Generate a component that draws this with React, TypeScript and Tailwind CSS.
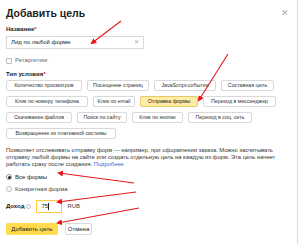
const TYPE_ROWS: { label: string; w: string; active?: boolean }[][] = [
  [
    { label: "Количество просмотров", w: "w-[76px]" },
    { label: "Посещение страниц", w: "w-[62px]" },
    { label: "JavaScript-события", w: "w-[62px]" },
    { label: "Составная цель", w: "w-[53px]" },
  ],
  [
    { label: "Клик по номеру телефона", w: "w-[82px]" },
    { label: "Клик по email", w: "w-[42px]" },
    { label: "Отправка формы", w: "w-[58px]", active: true },
    { label: "Переход в мессенджер", w: "w-[73px]" },
  ],
  [
    { label: "Скачивание файлов", w: "w-[66px]" },
    { label: "Поиск по сайту", w: "w-[50px]" },
    { label: "Клик по кнопке", w: "w-[51px]" },
    { label: "Переход в соц. сеть", w: "w-[64px]" },
  ],
  [{ label: "Возвращение из платежной системы", w: "w-[110px]" }],
];

const ARROWS: [number, number, number, number][] = [
  [121, 21, 92, 43],
  [228, 54, 199, 100],
  [134, 183, 59, 173],
  [136, 192, 58, 202],
  [139, 208, 58, 223],
];

function TypeButton({ label, w, active }: { label: string; w: string; active?: boolean }) {
  return (
    <div
      className={
        w +
        (active
          ? " shrink-0 whitespace-nowrap h-[11px] flex items-center justify-center rounded-[2px] border border-[#e6c86a] bg-[#ffeca6] text-[#222]"
          : " shrink-0 whitespace-nowrap h-[11px] flex items-center justify-center rounded-[2px] border border-[#d9d9d9] bg-white text-[#333]")
      }
    >
      {label}
    </div>
  );
}

function Arrows() {
  return (
    <svg className="absolute inset-0 pointer-events-none" width="300" height="244">
      <defs>
        <marker id="head" markerWidth="6" markerHeight="6" refX="4" refY="3" orient="auto" markerUnits="userSpaceOnUse">
          <path d="M0,0 L6,3 L0,6 Z" fill="#e8161b" />
        </marker>
      </defs>
      {ARROWS.map(([x1, y1, x2, y2], i) => (
        <line key={i} x1={x1} y1={y1} x2={x2} y2={y2} stroke="#e8161b" strokeWidth="1.1" markerEnd="url(#head)" />
      ))}
    </svg>
  );
}

export default function App() {
  return (
    <div
      className="relative w-[300px] h-[244px] overflow-hidden bg-white text-[#222]"
      style={{ fontFamily: "'Liberation Sans', Arial, sans-serif" }}
    >
      <div className="w-[298px] h-full border-r border-[#dcdcdc] pl-[6px] pt-[7px]">
        <div className="flex items-center justify-between pr-[8px]">
          <span className="text-[10.5px] leading-[13px] font-bold">Добавить цель</span>
          <span className="text-[9px] leading-none text-[#aaa]">✕</span>
        </div>

        <div className="mt-[6px] text-[6px] leading-[7px] font-bold">
          Название<span className="text-[#e8161b]">*</span>
        </div>
        <div className="mt-[3px] w-[138px] h-[13px] border border-[#d9d9d9] flex items-center justify-between pl-[4px] pr-[4px] text-[6px]">
          <span>Лид по любой форме</span>
          <span className="text-[#aaa] text-[6px]">✕</span>
        </div>

        <div className="mt-[7px] flex items-center gap-[3px] text-[6px] text-[#666]">
          <span className="w-[6px] h-[6px] border border-[#bbb] rounded-[1px]" />
          <span>Ретаргетинг</span>
        </div>

        <div className="mt-[6px] text-[6px] leading-[7px] font-bold">
          Тип условия<span className="text-[#e8161b]">*</span>
        </div>

        <div className="mt-[2px] flex flex-col gap-[5px] text-[5.3px] leading-none">
          {TYPE_ROWS.map((row, i) => (
            <div key={i} className="flex gap-[5px]">
              {row.map((b) => (
                <TypeButton key={b.label} label={b.label} w={b.w} active={b.active} />
              ))}
            </div>
          ))}
        </div>

        <p className="mt-[8px] whitespace-nowrap text-[5.8px] leading-[7px] text-[#333]">
          Позволяет отслеживать отправку форм — например, при оформлении заказа. Можно засчитывать
          <br />
          отправку любой формы на сайте или создать отдельную цель на каждую из форм. Эта цель начнет
          <br />
          работать сразу после создания. <span className="text-[#2f6fd6]">Подробнее</span>
        </p>

        <div className="mt-[6px] flex flex-col gap-[6px] text-[6px] leading-[6px]">
          <div className="flex items-center gap-[3px]">
            <span className="w-[6px] h-[6px] rounded-full border border-[#999] flex items-center justify-center">
              <span className="w-[3px] h-[3px] rounded-full bg-[#222]" />
            </span>
            <span>Все формы</span>
          </div>
          <div className="flex items-center gap-[3px] text-[#444]">
            <span className="w-[6px] h-[6px] rounded-full border border-[#bbb]" />
            <span>Конкретная форма</span>
          </div>
        </div>

        <div className="mt-[8px] flex items-center text-[6px]">
          <span className="font-bold">Доход</span>
          <span className="ml-[2px] w-[5px] h-[5px] rounded-full border border-[#bbb]" />
          <div className="ml-[5px] w-[26px] h-[13px] border border-[#ffcc33] flex items-center pl-[4px]">
            <span>75</span>
            <span className="w-px h-[7px] bg-[#222]" />
          </div>
          <span className="ml-[5px] text-[#444]">RUB</span>
        </div>

        <div className="mt-[10px] flex gap-[7px] text-[6px]">
          <div className="w-[52px] h-[12px] rounded-[2px] bg-[#ffdb4d] flex items-center justify-center">Добавить цель</div>
          <div className="w-[27px] h-[12px] rounded-[2px] border border-[#d9d9d9] flex items-center justify-center">Отмена</div>
        </div>
      </div>
      <Arrows />
    </div>
  );
}
